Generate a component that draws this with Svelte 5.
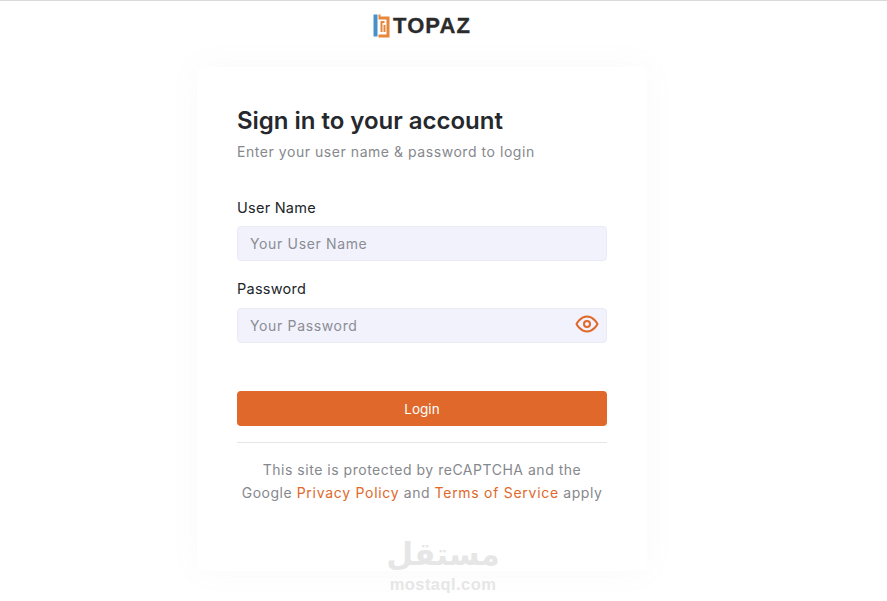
<script>
  // login form state
  let username = "";
  let password = "";
  let showPassword = false;
</script>

<style>
  :global(body) { background: #fff; font-family: Inter, "Open Sans", Arial, sans-serif; }
  .page { height: 601px; overflow: hidden; border-top: 1px solid #d9d9d9; box-sizing: border-box; position: relative; }
  .column { width: 450px; margin-left: 197px; }
  .brand { display: flex; justify-content: center; align-items: center; gap: 2px; height: 49px; }
  .brand-mark { width: 18px; height: 24px; display: block; }
  .brand-name { font-family: "Liberation Sans", Arial, sans-serif; font-weight: 700; font-size: 22px; letter-spacing: 1.1px; color: #2b2b2b; -webkit-text-stroke: .3px #2b2b2b; }
  .card { height: 504px; box-sizing: border-box; margin-top: 17px; padding: 40px; background: #fff; border-radius: 8px; box-shadow: 0 0 30px rgba(120, 140, 130, .055); }
  h1 { margin: 0; font-size: 24px; line-height: 28px; font-weight: 600; color: #25282c; letter-spacing: -.02px; }
  .sub { margin: 7px 0 0; font-size: 14px; line-height: 20px; color: #85888d; letter-spacing: .55px; }
  .field { margin-top: 18px; }
  .field.first { margin-top: 36px; }
  label { display: block; font-size: 14.5px; line-height: 20px; color: #212529; margin-bottom: 8px; letter-spacing: .25px; }
  .field.last label { margin-bottom: 9px; }
  .input-wrap { position: relative; }
  input { display: block; width: 100%; height: 35px; box-sizing: border-box; padding: 0 12px; border: 1px solid #eaeaf6; border-radius: 4px; background: #f2f2fd; font: inherit; font-size: 14px; letter-spacing: .65px; color: #212529; outline: none; }
  input::placeholder { color: #8a8d93; opacity: 1; }
  .eye { position: absolute; right: 8px; top: 4px; padding: 0; border: 0; background: none; line-height: 0; cursor: pointer; }
  .login { display: block; width: 100%; height: 35px; margin-top: 48px; border: 0; border-radius: 4px; background: #e0682b; color: #fff; font: inherit; font-size: 13.5px; font-weight: 400; cursor: pointer; }
  hr { margin: 16px 0 0; border: 0; border-top: 1px solid #e6e6e9; }
  .terms { margin: 15px 0 0; text-align: center; font-size: 14px; line-height: 23px; color: #85888d; letter-spacing: .52px; white-space: nowrap; }
  .terms a { color: #e0682b; text-decoration: none; letter-spacing: .72px; }
  .watermark { position: absolute; left: 343px; top: 532px; width: 200px; text-align: center; color: #e6e6e6; pointer-events: none; }
  .wm-ar { font-family: "DejaVu Sans", sans-serif; font-weight: 700; font-size: 31px; line-height: 42px; }
  .wm-en { font-family: "Liberation Sans", Arial, sans-serif; font-weight: 700; font-size: 16.5px; line-height: 18px; letter-spacing: .45px; }
</style>

<div class="page">
  <div class="column">
    <div class="brand">
      <svg class="brand-mark" viewBox="0 0 18 24" aria-hidden="true">
        <rect x="0.500" y="0.500" width="4" height="22" fill="#4a90c8" />
        <path d="M5.500 0.500h2v2h9v21h-11v-3h8v-15h-8z" fill="#e8863a" />
        <path d="M7.500 7h4v2h-2v9h-2z" fill="#e8863a" />
        <rect x="10.500" y="11" width="2" height="7" fill="#e8863a" />
      </svg>
      <span class="brand-name">TOPAZ</span>
    </div>

    <div class="card">
      <h1>Sign in to your account</h1>
      <p class="sub">Enter your user name &amp; password to login</p>

      <div class="field first">
        <label for="username">User Name</label>
        <input id="username" placeholder="Your User Name" bind:value={username} />
      </div>

      <div class="field last">
        <label for="password">Password</label>
        <div class="input-wrap">
          {#if showPassword}
            <input id="password" type="text" placeholder="Your Password" bind:value={password} />
          {:else}
            <input id="password" type="password" placeholder="Your Password" bind:value={password} />
          {/if}
          <button class="eye" type="button" aria-label="Show password" on:click={() => (showPassword = !showPassword)}>
            <svg width="24" height="24" viewBox="0 0 24 24" fill="none" stroke="#e0682b" stroke-width="2" stroke-linecap="round" stroke-linejoin="round">
              <path d="M1.500 12s3.800-7.500 10.500-7.500S22.500 12 22.500 12s-3.800 7.500-10.500 7.500S1.500 12 1.500 12z" />
              <circle cx="12" cy="12" r="3" />
            </svg>
          </button>
        </div>
      </div>

      <button class="login" type="button">Login</button>
      <hr />
      <p class="terms">
        This site is protected by reCAPTCHA and the<br />
        Google <a href="#privacy">Privacy Policy</a> and <a href="#terms">Terms of Service</a> apply
      </p>
    </div>
  </div>

  <div class="watermark">
    <div class="wm-ar">مستقل</div>
    <div class="wm-en">mostaql.com</div>
  </div>
</div>
